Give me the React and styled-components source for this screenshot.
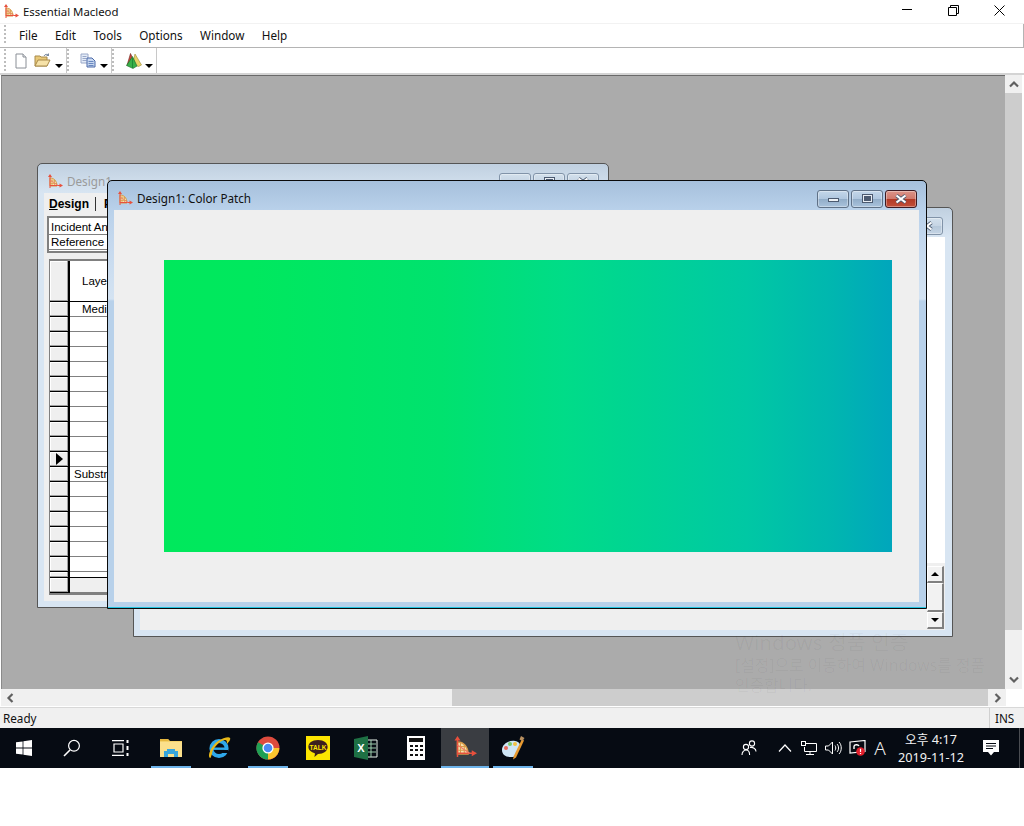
import styled, { createGlobalStyle } from 'styled-components'

const Global = createGlobalStyle`
  html, body { margin: 0; padding: 0; background: #fff; }
  body { font-family: "Noto Sans", "Noto Sans CJK KR", sans-serif; }
`

const Screen = styled.div`
  position: relative;
  width: 1024px;
  height: 826px;
  overflow: hidden;
  background: #fff;
`

const AppFrame = styled.div`
  height: 728px;
  display: flex;
  flex-direction: column;
`

const TitleBar = styled.div`
  height: 23px;
  display: flex;
  align-items: center;
  padding-left: 3px;
  border-bottom: 1px solid #f2f2f2;
  font-size: 11.4px;
  color: #111;
`

const TitleText = styled.span`
  margin-left: 4px;
`

const CaptionButtons = styled.div`
  margin-left: auto;
  padding-right: 2px;
  display: flex;
`

const CaptionButton = styled.div`
  width: 46px;
  height: 20px;
  padding-bottom: 3px;
  display: flex;
  align-items: center;
  justify-content: center;
`

const MenuBar = styled.div`
  height: 21px;
  padding-bottom: 2px;
  display: flex;
  align-items: center;
  padding-left: 4px;
  border-bottom: 1px solid #b4b4b4;
  border-right: 1px solid #b4b4b4;
  font-size: 11.7px;
  color: #111;
`

const Grip = styled.i`
  width: 2px;
  align-self: stretch;
  margin: 1px 0;
  background: repeating-linear-gradient(180deg, #bdbdbd 0 2px, #fff 2px 4px);
`

const MenuList = styled.div`
  display: flex;
  gap: 17.4px;
  padding-left: 13px;
`

const ToolBar = styled.div`
  height: 25px;
  display: flex;
  padding-left: 4px;
  border-bottom: 2px solid #d4d4d4;
`

const ToolGroup = styled.div`
  width: ${p => p.$width}px;
  display: flex;
  align-items: center;
  border-right: 1px solid #c8c8c8;
`

const ToolIcon = styled.div`
  margin-left: ${p => p.$left}px;
  display: flex;
`

const DropArrow = styled.b`
  width: 0;
  height: 0;
  margin-left: ${p => p.$left}px;
  margin-top: 10px;
  border-left: 4px solid transparent;
  border-right: 4px solid transparent;
  border-top: 4px solid #000;
`

const Workspace = styled.div`
  flex: 1;
  display: flex;
  padding-right: 2px;
  min-height: 0;
`

const MdiArea = styled.div`
  position: relative;
  flex: 1;
  margin-left: 1px;
  background: #ababab;
  border-top: 1px solid #696969;
  border-left: 1px solid #8a8a8a;
`

const VScroll = styled.div`
  width: 17px;
  display: flex;
  flex-direction: column;
  align-items: center;
  background: #f0f0f0;
`

const VArrow = styled.div`
  height: 18px;
  width: 100%;
  display: flex;
  align-items: center;
  justify-content: center;
`

const VThumb = styled.div`
  width: 100%;
  height: 537px;
  background: #cdcdcd;
`

const VTrack = styled.div`
  flex: 1;
`

const HScroll = styled.div`
  height: 17px;
  margin: 0 18px 1px 1px;
  display: flex;
  align-items: center;
  background: #f0f0f0;
`

const HArrow = styled.div`
  width: 17px;
  height: 100%;
  display: flex;
  align-items: center;
  justify-content: center;
`

const HThumb = styled.div`
  width: 536px;
  height: 100%;
  margin-left: 434px;
  background: #cdcdcd;
`

const HTrack = styled.div`
  flex: 1;
`

const StatusBar = styled.div`
  height: 20px;
  display: flex;
  align-items: center;
  border-top: 1px solid #d8d8d8;
  background: #f0f0f0;
  font-size: 11.7px;
  color: #111;
`

const StatusText = styled.span`
  padding-left: 3px;
  flex: 1;
`

const StatusPane = styled.span`
  width: 35px;
  height: 100%;
  line-height: 20px;
  padding-left: 5px;
  box-sizing: border-box;
  border-left: 1px solid #d0d0d0;
`

const Win = styled.div`
  position: absolute;
  left: ${p => p.$left}px;
  top: ${p => p.$top}px;
  width: ${p => p.$width}px;
  height: ${p => p.$height}px;
  box-sizing: border-box;
  display: flex;
  flex-direction: column;
  padding: 0 7px 6px 6px;
  border: 1px solid ${p => (p.$active ? '#0a0a0a' : '#555')};
  border-radius: 5px 5px 0 0;
  background: ${p => (p.$active
    ? 'linear-gradient(180deg, #a6c0dc 0, #b9d1ea 29px, #c4d8ee 60px, #d4e3f2 118px, #b8d1ea 120px)'
    : 'linear-gradient(180deg, #c0d0e0 0, #d8e5f2 29px)')};
  box-shadow: ${p => (p.$active ? 'inset 0 -1px 0 #22c4e0' : 'none')};
`

const WinTitle = styled.div`
  height: 29px;
  flex-shrink: 0;
  box-sizing: border-box;
  padding: 6px 0 0 3px;
  display: flex;
  align-items: center;
  font-size: 11.7px;
  color: ${p => (p.$active ? '#111' : '#9a9a9a')};
`

const WinTitleText = styled.span`
  margin: 0 0 2px 4px;
`

const WinButtons = styled.div`
  margin-left: auto;
  margin-right: 2px;
  display: flex;
  gap: 2px;
`

const buttonFill = p => {
  if (p.$dim) return 'linear-gradient(180deg, #d3e0ec 0, #c6d5e4 48%, #b6c8da 52%, #c4d4e4 100%)'
  if (p.$close) return 'linear-gradient(180deg, #dc9488 0, #d0796c 48%, #b23a26 52%, #c2503a 100%)'
  return 'linear-gradient(180deg, #c4d7ea 0, #b0c7df 48%, #92adc8 52%, #a9c2dc 100%)'
}

const buttonEdge = p => {
  if (p.$dim) return '#8193a8'
  return p.$close ? '#3c1a22' : '#5f7187'
}

const WinButton = styled.div`
  width: 32px;
  height: 18px;
  box-sizing: border-box;
  display: flex;
  align-items: center;
  justify-content: center;
  border: 1px solid ${buttonEdge};
  border-radius: 3px;
  background: ${buttonFill};
  box-shadow: inset 0 0 0 1px rgba(255, 255, 255, .35);
`

const MinGlyph = styled.i`
  width: 11px;
  height: 4px;
  margin-top: 3px;
  background: #eef2f6;
  border: 1px solid #4c5a70;
  box-sizing: border-box;
`

const MaxGlyph = styled.i`
  width: 11px;
  height: 9px;
  box-sizing: border-box;
  background: #4c5a70;
  border: 2px solid #e8edf3;
  outline: 1px solid #4c5a70;
  outline-offset: -1px;
`

const Client = styled.div`
  flex: 1;
  min-height: 0;
  overflow: hidden;
  background: #efefef;
`

const PatchClient = styled(Client)`
  padding: 50px 27px 50px 50px;
  display: flex;
`

const Patch = styled.div`
  flex: 1;
  background: linear-gradient(90deg, #00e85c 0%, #00e85e 12%, #00e26e 38%, #00dc88 55%, #00c8a4 80%, #00b6b0 92%, #00a6bc 100%);
`

const DesignClient = styled(Client)`
  padding: 1px 2px 0 2px;
  font-family: "Liberation Sans", Arial, sans-serif;
  font-size: 11.5px;
  color: #000;
`

const Tabs = styled.div`
  height: 20px;
  padding-bottom: 2px;
  display: flex;
  align-items: center;
  font-weight: 700;
  font-size: 12px;
`

const Tab = styled.span`
  padding: 0 6px 0 3px;
  border-right: 1px solid #333;
  margin-right: 8px;
  white-space: nowrap;
`

const InfoBox = styled.div`
  width: 500px;
  height: 37px;
  margin: 0 0 6px 1px;
  box-sizing: border-box;
  padding-top: 2px;
  border: 2px solid #808080;
  border-right: none;
  background: #fff;
`

const InfoRow = styled.div`
  height: 15px;
  line-height: 14px;
  padding-left: 2px;
  box-sizing: border-box;
  border-bottom: 1px solid #808080;
  white-space: nowrap;
`

const DesignGrid = styled.div`
  width: 530px;
  margin-left: 3px;
  border-top: 2px solid #808080;
  border-left: 1px solid #808080;
  border-bottom: 2px solid #808080;
  background: #fff;
`

const GridRow = styled.div`
  height: ${p => p.$height || 15}px;
  box-sizing: border-box;
  display: flex;
`

const RowHead = styled.div`
  width: 20px;
  flex-shrink: 0;
  box-sizing: border-box;
  display: flex;
  align-items: center;
  justify-content: center;
  background: #efefef;
  border-right: 2px solid #000;
  border-bottom: 1px solid #000;
  box-shadow: inset -1px -1px 0 #a0a0a0, inset 1px 1px 0 #fff;
`

const Cell = styled.div`
  flex: 1;
  box-sizing: border-box;
  padding-left: ${p => p.$pad || 0}px;
  display: flex;
  align-items: ${p => (p.$tall ? 'center' : 'flex-start')};
  line-height: 15px;
  background: ${p => (p.$muted ? '#efefef' : '#fff')};
  border-bottom: 1px solid ${p => (p.$dark ? '#000' : '#808080')};
`

const RowArrow = styled.b`
  width: 0;
  height: 0;
  border-top: 6px solid transparent;
  border-bottom: 6px solid transparent;
  border-left: 7px solid #000;
`

const SheetClient = styled(Client)`
  display: flex;
  flex-direction: column;
  background: #fff;
`

const SheetBody = styled.div`
  flex: 1;
`

const SheetFoot = styled.div`
  height: 67px;
  padding: 3px 1px 0 0;
  box-sizing: border-box;
  display: flex;
  flex-direction: column;
  align-items: flex-end;
  background: #efefef;
`

const SheetArrow = styled.div`
  width: 17px;
  height: 17px;
  box-sizing: border-box;
  display: flex;
  align-items: center;
  justify-content: center;
  background: #f2f2f2;
  border-right: 2px solid #808080;
  border-bottom: 2px solid #808080;
  border-top: 1px solid #fff;
  border-left: 1px solid #fff;
`

const SheetThumb = styled(SheetArrow)`
  height: 29px;
`

const Caret = styled.b`
  width: 0;
  height: 0;
  border-left: 4px solid transparent;
  border-right: 4px solid transparent;
  border-${p => (p.$up ? 'bottom' : 'top')}: 4px solid #000;
`

const Watermark = styled.div`
  position: absolute;
  left: 735px;
  top: 629px;
  width: 262px;
  word-break: keep-all;
  color: rgba(0, 0, 0, .04);
  pointer-events: none;
  font-family: "Noto Sans", "Noto Sans CJK KR", sans-serif;
`

const WatermarkHead = styled.div`
  font-size: 20.5px;
  line-height: 26px;
`

const WatermarkBody = styled.div`
  font-size: 15.8px;
  line-height: 20px;
`

const Taskbar = styled.div`
  height: 40px;
  display: flex;
  background: #060b13;
  color: #f2f2f2;
`

const TaskItem = styled.div`
  position: relative;
  width: 48px;
  height: 40px;
  margin-left: ${p => p.$left || 0}px;
  display: flex;
  align-items: center;
  justify-content: center;
  background: ${p => (p.$active ? '#3a3d42' : 'transparent')};
  &::after {
    content: '';
    display: ${p => (p.$running || p.$active ? 'block' : 'none')};
    position: absolute;
    bottom: 0;
    left: ${p => (p.$active ? 0 : 4)}px;
    right: ${p => (p.$active ? 0 : 4)}px;
    height: 2px;
    background: #6db3ea;
  }
`

const Tray = styled.div`
  margin-left: auto;
  margin-right: 4px;
  padding-right: 3px;
  display: flex;
  align-items: center;
  border-right: 1px solid #4a4d52;
`

const TrayIcon = styled.div`
  width: ${p => p.$width}px;
  margin-right: ${p => p.$gap || 0}px;
  display: flex;
  justify-content: center;
`

const TrayLetter = styled.span`
  width: 22px;
  text-align: center;
  font-size: 19px;
  font-weight: 300;
`

const Clock = styled.div`
  width: 70px;
  margin-left: 5px;
  text-align: center;
  white-space: nowrap;
  font-size: 12.7px;
  line-height: 18px;
`

const MacleodIcon = ({ size = 16 }) => (
  <svg width={size} height={size} viewBox="0 0 16 16">
    <path d="M3 4c4 0 7 3 7 8H3z" fill="#f6e2b0" stroke="#d69a48" strokeWidth="1" />
    <path d="M5 4.500v7.500M7.500 6v6M3.500 7h5M3.500 9.500h6.500" stroke="#d69a48" strokeWidth=".7" />
    <path d="M3 2v12M3 11.500h10" stroke="#e8503c" strokeWidth="1" fill="none" />
    <path d="M3 0l2 3H1zM16 11.500l-3.500 2v-4z" fill="#e8503c" />
    <path d="M3 6l8 5.500" stroke="#ef7a68" strokeWidth=".8" />
  </svg>
)

const NewDocIcon = () => (
  <svg width="14" height="16" viewBox="0 0 14 16">
    <path d="M2 1h7l3 3v11H2z" fill="#fff" stroke="#8a8f96" />
    <path d="M9 1v3h3" fill="#e6e8ec" stroke="#8a8f96" />
  </svg>
)

const OpenIcon = () => (
  <svg width="17" height="15" viewBox="0 0 17 15">
    <path d="M1 3h5l1 1h6v9H1z" fill="#e8c878" stroke="#a88a4a" />
    <path d="M1 13l3-6h12l-3 6z" fill="#f6e2a8" stroke="#a88a4a" />
    <path d="M10 3c1-2 3-2 5-1" fill="none" stroke="#7a8aa0" strokeWidth="1" />
    <path d="M15 0v3h-3z" fill="#7a8aa0" />
  </svg>
)

const CopyIcon = () => (
  <svg width="16" height="15" viewBox="0 0 16 15">
    <path d="M1 1h7v9H1z" fill="#e4ecf8" stroke="#9aa8c8" />
    <path d="M2.500 3.500h4M2.500 5.500h4M2.500 7.500h4" stroke="#9aa8c8" />
    <path d="M7 5h5l3 3v6H7z" fill="#c8d8f0" stroke="#4a68a8" />
    <path d="M8.500 8.500h5M8.500 10.500h5M8.500 12.500h5" stroke="#6a88c0" />
  </svg>
)

const MountainsIcon = () => (
  <svg width="17" height="17" viewBox="0 0 17 17">
    <path d="M10 2l6.500 11-3 1.500-6-2z" fill="#e8d468" stroke="#9a8a34" strokeWidth=".6" />
    <path d="M5.500 1.500l4.500 10-8 2z" fill="#c8483e" stroke="#6a2018" strokeWidth=".6" />
    <path d="M7.500 4.500l4.500 9.500-4 2.500-6.500-3z" fill="#38b048" stroke="#1a6a2a" strokeWidth=".6" />
    <path d="M7.500 6v10" stroke="#1f8a36" strokeWidth="1" />
  </svg>
)

const WinLogo = () => (
  <svg width="16" height="16" viewBox="0 0 16 16" fill="#fff">
    <path d="M0 2.300l6.600-.9v6.200H0zM7.400 1.300L16 0v7.600H7.400zM0 8.400h6.600v6.200L0 13.700zM7.400 8.400H16V16l-8.600-1.300z" />
  </svg>
)

const SearchIcon = () => (
  <svg width="18" height="18" viewBox="0 0 18 18" fill="none" stroke="#fff" strokeWidth="1.200">
    <circle cx="11" cy="6.800" r="5.400" />
    <path d="M7 11L1 17" strokeWidth="1.600" />
  </svg>
)

const TaskViewIcon = () => (
  <svg width="17" height="16" viewBox="0 0 17 16" fill="none" stroke="#fff" strokeWidth="1.200">
    <path d="M0 .6h12M0 15.400h12M2 4h9v8H2z" />
    <path d="M15.500 0v3M15.500 6v4M15.500 13v3" strokeWidth="2" />
  </svg>
)

const FolderIcon = () => (
  <svg width="22" height="20" viewBox="0 0 22 20">
    <path d="M0 1h8l2 2h12v16H0z" fill="#f4d26a" />
    <path d="M0 4h22v15H0z" fill="#fbe08c" />
    <path d="M0 1h8l1 2H0z" fill="#e6b840" />
    <path d="M4 19v-6h3v-2h8v2h3v6h-4v-3H8v3z" fill="#38a6dc" />
  </svg>
)

const IeIcon = () => (
  <svg width="24" height="24" viewBox="0 0 24 24">
    <circle cx="12" cy="12.500" r="7.600" fill="none" stroke="#2fa8ea" strokeWidth="4" />
    <path d="M6 11.500h13v2.400H6z" fill="#2fa8ea" />
    <path d="M13 14h8v3h-8z" fill="#060b13" />
    <path d="M3 22C0 20 4 10 11 5c5-3 11-5 12-3 1 1-1 4-3 6 0-2 0-4-2-4-4 0-13 8-13 14-1 2-1 4-2 4z" fill="#e8b818" />
  </svg>
)

const ChromeIcon = () => (
  <svg width="24" height="24" viewBox="0 0 24 24">
    <circle cx="12" cy="12" r="11.500" fill="#dd4b3e" />
    <path d="M12 12L2 6.200A11.500 11.500 0 0 0 12 23.500l5-8.500z" fill="#1fa055" />
    <path d="M12 12h11.300A11.500 11.500 0 0 1 12 23.500z" fill="#fbc52d" />
    <circle cx="12" cy="12" r="5.600" fill="#fff" />
    <circle cx="12" cy="12" r="4.300" fill="#4a8af4" />
  </svg>
)

const KakaoIcon = () => (
  <svg width="24" height="24" viewBox="0 0 24 24">
    <rect width="24" height="24" fill="#fde500" />
    <path d="M12 4c6 0 9.600 3 9.600 7s-4 7-9.600 7l-3.600 3 .6-3.600C5 16 2.400 14 2.400 11c0-4 3.600-7 9.600-7z" fill="#3b1e1e" />
    <text x="12" y="13.500" textAnchor="middle" fontSize="6.500" fontWeight="700" fontFamily="Liberation Sans" fill="#fde500">TALK</text>
  </svg>
)

const ExcelIcon = () => (
  <svg width="24" height="24" viewBox="0 0 24 24">
    <path d="M12 4h11v17H12z" fill="#060b13" stroke="#e6f2ea" />
    <path d="M13 8h9M13 12h9M13 16h9M17 4v17" stroke="#9ccfae" />
    <path d="M0 3l14-3v24L0 21z" fill="#1e7044" />
    <text x="7" y="16" textAnchor="middle" fontSize="11" fontWeight="700" fontFamily="Liberation Sans" fill="#fff">X</text>
  </svg>
)

const CalcIcon = () => (
  <svg width="18" height="24" viewBox="0 0 18 24">
    <rect width="18" height="24" fill="#fff" />
    <rect x="2" y="2" width="14" height="4" fill="#111" />
    <path d="M3 9h3v2H3zM8 9h3v2H8zM13 9h3v2h-3zM3 13h3v2H3zM8 13h3v2H8zM13 13h3v2h-3zM3 18h3v2H3zM8 18h3v2H8zM13 18h3v2h-3z" fill="#111" />
  </svg>
)

const PaletteIcon = () => (
  <svg width="24" height="24" viewBox="0 0 24 24">
    <path d="M1 14C1 8 8 4 14 5c5 1 6 4 5 7-1 3-4 3-4 6s-2 3-6 3c-5 0-8-3-8-7z" fill="#cfe6f6" />
    <circle cx="5" cy="12" r="2" fill="#e86a5a" />
    <circle cx="9" cy="8" r="2" fill="#7ac86a" />
    <circle cx="14" cy="8" r="2" fill="#f4c040" />
    <path d="M21 3l2 1.500-8 17-3 2 1-4z" fill="#e89a30" />
    <path d="M20 0l3.500 2-2 3-3-1.500z" fill="#b89060" />
  </svg>
)

const PeopleIcon = () => (
  <svg width="16" height="16" viewBox="0 0 16 16" fill="none" stroke="#fff" strokeWidth="1.100">
    <circle cx="11" cy="3.500" r="2.600" />
    <circle cx="5" cy="7" r="2.600" />
    <path d="M1 15c0-3 2-5 4-5s3.600 2 3.600 5M9 7.500c3-.5 6 1 6 4" />
  </svg>
)

const TrayUp = () => (
  <svg width="14" height="8" viewBox="0 0 14 8" fill="none" stroke="#fff" strokeWidth="1.200">
    <path d="M1 7.500L7 1l6 6.500" />
  </svg>
)

const NetworkIcon = () => (
  <svg width="16" height="14" viewBox="0 0 16 14" fill="none" stroke="#fff">
    <path d="M5 2.500h10.500v8h-12V6M9 10.500v2.500M5 13.500h8" />
    <rect x=".5" y=".5" width="4" height="4" />
  </svg>
)

const VolumeIcon = () => (
  <svg width="17" height="14" viewBox="0 0 17 14" fill="none" stroke="#fff">
    <path d="M.5 5h3l4-4v12l-4-4h-3z" />
    <path d="M10 4.500c1 1.500 1 3.500 0 5M12 3c2 2 2 6 0 8M14 1c3 3 3 9 0 12" />
  </svg>
)

const SecurityIcon = () => (
  <svg width="17" height="16" viewBox="0 0 17 16">
    <path d="M1 2l15-1.500v11L1 13z" fill="none" stroke="#fff" strokeWidth="1.200" />
    <path d="M5 9V6.500c0-2 4-2.500 5-.5" fill="none" stroke="#fff" strokeWidth="1.400" />
    <circle cx="11.500" cy="11.500" r="4.300" fill="#e01f2c" />
    <path d="M11.500 8.800v3.200M11.500 13v1" stroke="#fff" strokeWidth="1.200" />
  </svg>
)

const NotifyIcon = () => (
  <svg width="16" height="16" viewBox="0 0 16 16">
    <path d="M0 0h16v12h-5l-3 3.500L5 12H0z" fill="#fff" />
    <path d="M3 3.500h10M3 6h10M3 8.500h7" stroke="#060b13" />
  </svg>
)

const GrayChevron = ({ dir }) => {
  const rotate = { up: 0, right: 90, down: 180, left: 270 }[dir]
  return (
    <svg width="10" height="8" viewBox="0 0 10 8" transform={`rotate(${rotate})`}>
      <path d="M1 6.500L5 2.500l4 4" fill="none" stroke="#606060" strokeWidth="2.200" />
    </svg>
  )
}

const Buttons = ({ dim }) => (
  <WinButtons>
    <WinButton $dim={dim}><MinGlyph /></WinButton>
    <WinButton $dim={dim}><MaxGlyph /></WinButton>
    <WinButton $dim={dim} $close>
      <svg width="14" height="10" viewBox="0 0 14 10">
        <path d="M2.500 1.500l9 7M11.500 1.500l-9 7" stroke="#4a5a70" strokeWidth="3.600" />
        <path d="M2.500 1.500l9 7M11.500 1.500l-9 7" stroke="#fff" strokeWidth="2.200" />
      </svg>
    </WinButton>
  </WinButtons>
)

const bodyRows = [
  ...Array(9).fill(''),
  'arrow',
  'Substrate',
  ...Array(6).fill(''),
]

const DesignWindow = () => (
  <Win $left={35} $top={87} $width={572} $height={445}>
    <WinTitle>
      <MacleodIcon />
      <WinTitleText>Design1</WinTitleText>
      <Buttons dim />
    </WinTitle>
    <DesignClient>
      <Tabs>
        <Tab>
          <u>D</u>esign
        </Tab>
        <span>Performance</span>
      </Tabs>
      <InfoBox>
        <InfoRow>Incident Angle (deg)</InfoRow>
        <InfoRow>Reference Wavelength (nm)</InfoRow>
      </InfoBox>
      <DesignGrid>
        <GridRow $height={41}>
          <RowHead />
          <Cell $tall $pad={12} $dark>Layer</Cell>
        </GridRow>
        <GridRow>
          <RowHead />
          <Cell $pad={12}>Medium</Cell>
        </GridRow>
        {bodyRows.map((row, i) => (
          <GridRow key={i}>
            <RowHead>{row === 'arrow' && <RowArrow />}</RowHead>
            <Cell $pad={4}>{row === 'arrow' ? '' : row}</Cell>
          </GridRow>
        ))}
        <GridRow $height={6}>
          <RowHead />
          <Cell $dark />
        </GridRow>
        <GridRow $height={15}>
          <RowHead />
          <Cell $muted />
        </GridRow>
      </DesignGrid>
    </DesignClient>
  </Win>
)

const SheetWindow = () => (
  <Win $left={131} $top={131} $width={820} $height={430}>
    <WinTitle>
      <Buttons dim />
    </WinTitle>
    <SheetClient>
      <SheetBody />
      <SheetFoot>
        <SheetArrow><Caret $up /></SheetArrow>
        <SheetThumb />
        <SheetArrow><Caret /></SheetArrow>
      </SheetFoot>
    </SheetClient>
  </Win>
)

const PatchWindow = () => (
  <Win $active $left={105} $top={104} $width={820} $height={429}>
    <WinTitle $active>
      <MacleodIcon />
      <WinTitleText>Design1: Color Patch</WinTitleText>
      <Buttons />
    </WinTitle>
    <PatchClient>
      <Patch />
    </PatchClient>
  </Win>
)

export default function App() {
  return (
    <Screen>
      <Global />
      <AppFrame>
        <TitleBar>
          <MacleodIcon />
          <TitleText>Essential Macleod</TitleText>
          <CaptionButtons>
            <CaptionButton>
              <svg width="10" height="2"><path d="M0 .5h10" stroke="#000" /></svg>
            </CaptionButton>
            <CaptionButton>
              <svg width="11" height="11" fill="none" stroke="#000">
                <path d="M.5 2.500h8v8h-8zM2.500 2.500v-2h8v8h-2" />
              </svg>
            </CaptionButton>
            <CaptionButton>
              <svg width="11" height="11" stroke="#000">
                <path d="M.5.5l10 10M10.500.5l-10 10" />
              </svg>
            </CaptionButton>
          </CaptionButtons>
        </TitleBar>
        <MenuBar>
          <Grip />
          <MenuList>
            <span>File</span>
            <span>Edit</span>
            <span>Tools</span>
            <span>Options</span>
            <span>Window</span>
            <span>Help</span>
          </MenuList>
        </MenuBar>
        <ToolBar>
          <ToolGroup $width={62}>
            <Grip />
            <ToolIcon $left={8}><NewDocIcon /></ToolIcon>
            <ToolIcon $left={6}><OpenIcon /></ToolIcon>
            <DropArrow $left={4} />
          </ToolGroup>
          <ToolGroup $width={44}>
            <Grip />
            <ToolIcon $left={11}><CopyIcon /></ToolIcon>
            <DropArrow $left={4} />
          </ToolGroup>
          <ToolGroup $width={44}>
            <Grip />
            <ToolIcon $left={11}><MountainsIcon /></ToolIcon>
            <DropArrow $left={3} />
          </ToolGroup>
        </ToolBar>
        <Workspace>
          <MdiArea>
            <DesignWindow />
            <SheetWindow />
            <PatchWindow />
          </MdiArea>
          <VScroll>
            <VArrow><GrayChevron dir="up" /></VArrow>
            <VThumb />
            <VTrack />
            <VArrow><GrayChevron dir="down" /></VArrow>
          </VScroll>
        </Workspace>
        <HScroll>
          <HArrow><GrayChevron dir="left" /></HArrow>
          <HThumb />
          <HTrack />
          <HArrow><GrayChevron dir="right" /></HArrow>
        </HScroll>
        <StatusBar>
          <StatusText>Ready</StatusText>
          <StatusPane>INS</StatusPane>
        </StatusBar>
      </AppFrame>
      <Taskbar>
        <TaskItem><WinLogo /></TaskItem>
        <TaskItem><SearchIcon /></TaskItem>
        <TaskItem><TaskViewIcon /></TaskItem>
        <TaskItem $left={3} $running><FolderIcon /></TaskItem>
        <TaskItem><IeIcon /></TaskItem>
        <TaskItem $left={1} $running><ChromeIcon /></TaskItem>
        <TaskItem $left={2}><KakaoIcon /></TaskItem>
        <TaskItem><ExcelIcon /></TaskItem>
        <TaskItem $left={2}><CalcIcon /></TaskItem>
        <TaskItem $left={1} $active><MacleodIcon size={24} /></TaskItem>
        <TaskItem $running><PaletteIcon /></TaskItem>
        <Tray>
          <TrayIcon $width={24} $gap={12}><PeopleIcon /></TrayIcon>
          <TrayIcon $width={24}><TrayUp /></TrayIcon>
          <TrayIcon $width={24}><NetworkIcon /></TrayIcon>
          <TrayIcon $width={24}><VolumeIcon /></TrayIcon>
          <TrayIcon $width={24}><SecurityIcon /></TrayIcon>
          <TrayLetter>A</TrayLetter>
          <Clock>오후 4:17<br />2019-11-12</Clock>
          <TrayIcon $width={50}><NotifyIcon /></TrayIcon>
        </Tray>
      </Taskbar>
      <Watermark>
        <WatermarkHead>Windows 정품 인증</WatermarkHead>
        <WatermarkBody>[설정]으로 이동하여 Windows를 정품 인증합니다.</WatermarkBody>
      </Watermark>
    </Screen>
  )
}
